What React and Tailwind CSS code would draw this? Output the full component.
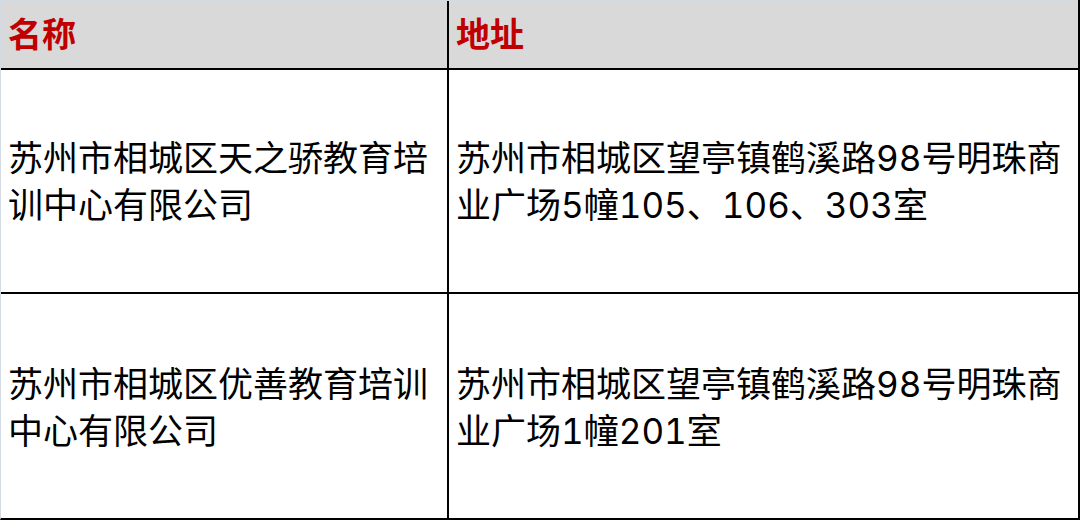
import React from "react";

const rows = [
  {
    name: ["苏州市相城区天之骄教育培", "训中心有限公司"],
    addr: ["苏州市相城区望亭镇鹤溪路98号明珠商", "业广场5幢105、106、303室"],
    h: "h-[224px]",
  },
  {
    name: ["苏州市相城区优善教育培训", "中心有限公司"],
    addr: ["苏州市相城区望亭镇鹤溪路98号明珠商", "业广场1幢201室"],
    h: "h-[226px]",
  },
];

// Inter for the digits (wider, like the original), CJK falls through to Noto
const font = { fontFamily: 'Inter, "Noto Sans CJK SC", sans-serif' };

function Lines({ lines }) {
  return (
    <div className="text-[35px] leading-[47px] text-black whitespace-nowrap tabular-nums">
      {lines.map((l, i) => (
        <div key={i}>{l}</div>
      ))}
    </div>
  );
}

export default function App() {
  return (
    <div
      className="w-[1080px] h-[520px] bg-white border-l border-l-[#d3dae3] border-r-2 border-r-black border-b-2 border-b-black overflow-hidden"
      style={font}
    >
      {/* header */}
      <div className="grid grid-cols-[448px_1fr] h-[70px] bg-[#d9d9d9] border-t border-t-[#d3dae3] border-b-2 border-b-black">
        <div className="flex items-center pl-[7px] border-r-2 border-r-black text-[34px] font-bold text-[#c00000]">
          名称
        </div>
        <div className="flex items-center pl-[7px] text-[34px] font-bold text-[#c00000]">地址</div>
      </div>

      {rows.map((r, i) => (
        <div
          key={i}
          className={`grid grid-cols-[448px_1fr] ${r.h} ${i === 0 ? "border-b-2 border-b-black" : ""}`}
        >
          <div className="flex items-center pl-[7px] pt-[2px] border-r-2 border-r-black">
            <Lines lines={r.name} />
          </div>
          <div className="flex items-center pl-[7px] pt-[2px]">
            <Lines lines={r.addr} />
          </div>
        </div>
      ))}
    </div>
  );
}
